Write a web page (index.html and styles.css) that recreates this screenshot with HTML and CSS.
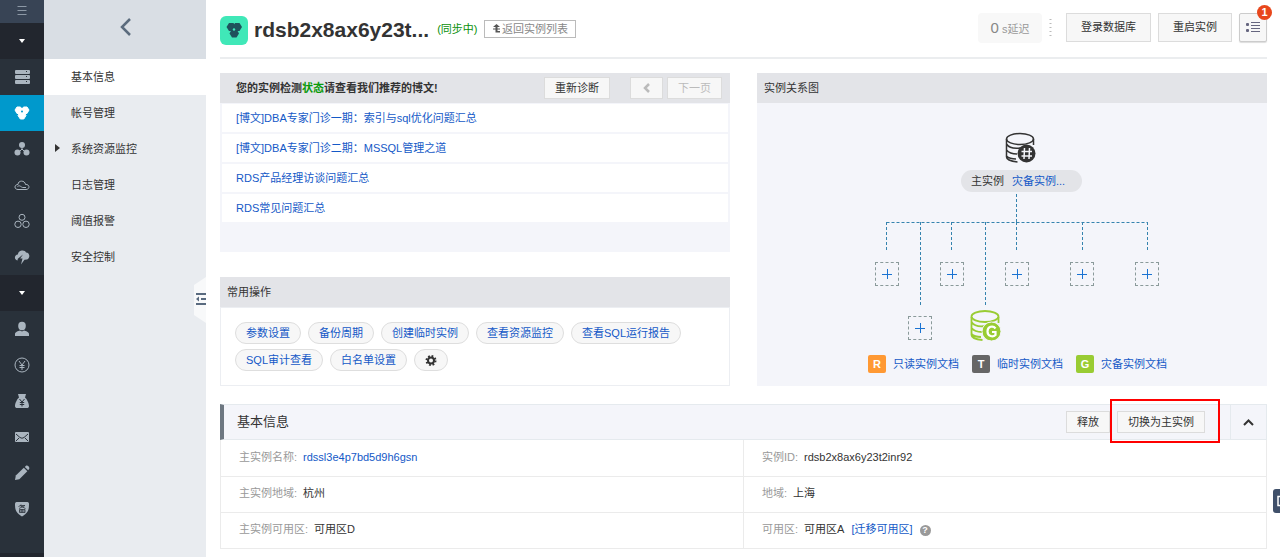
FILE: index.html
```html
<!DOCTYPE html>
<html lang="zh-CN">
<head>
<meta charset="utf-8">
<meta name="viewport" content="width=device-width, initial-scale=1">
<title>RDS 基本信息</title>
<link rel="stylesheet" href="styles.css">
</head>
<body>
<div class="app">
  <nav class="rail" aria-label="产品导航">
    <button class="rail-menu" type="button" aria-label="菜单">
      <svg width="10" height="12" viewBox="0 0 10 12" stroke="#8d99a6"><path d="M0.5 1.5h9M0.5 5.500h9M0.5 9.500h9"/></svg>
    </button>
    <button class="rail-item rail-group" type="button" aria-label="产品"><svg width="6" height="4" viewBox="0 0 6 4"><path d="M0 0h6L3 4z" fill="#fff"/></svg></button>
    <a class="rail-item" href="#" aria-label="服务器">
      <svg width="16" height="16" viewBox="0 0 16 16"><g fill="#aab5bf"><rect x="1" y="1" width="15" height="4" rx="1"/><rect x="1" y="6" width="15" height="4" rx="1"/><rect x="1" y="11" width="15" height="4" rx="1"/></g><g fill="#29313a"><rect x="12" y="2" width="1" height="1"/><rect x="12" y="7" width="1" height="1"/><rect x="12" y="12" width="1" height="1"/></g></svg>
    </a>
    <a class="rail-item rail-active" href="#" aria-label="云数据库">
      <svg width="16" height="16" viewBox="0 0 16 16"><g fill="#fff" stroke="#fff" stroke-linejoin="round"><path d="M3 2h3.500L8.500 5 6.500 8.500H3L1 5z"/><path d="M9.500 2H13L15 5 13 8.500H9.500L7.500 5z"/><path d="M6.300 6.500h3.500L12 10.500 9.800 14H6.300L4 10.500z"/></g><circle cx="8" cy="6.500" r="1" fill="#0099cc"/></svg>
    </a>
    <a class="rail-item" href="#" aria-label="负载均衡">
      <svg width="16" height="16" viewBox="0 0 16 16"><path d="M8 4v4L4 12M8 8l4 4" fill="none" stroke="#aab5bf"/><g fill="#aab5bf"><circle cx="8" cy="4" r="3"/><circle cx="3.500" cy="11.500" r="3"/><circle cx="12.500" cy="11.500" r="3"/></g></svg>
    </a>
    <a class="rail-item" href="#" aria-label="云存储">
      <svg width="16" height="16" viewBox="0 0 16 16" fill="none" stroke="#aab5bf"><path d="M4 12.500C0 12.500 0 7.500 4 7.500 4 3 11 3 11.500 7.500 16 7 16 12.500 12 12.500z"/><path d="M3.500 9.500C6 7.500 7 10.500 9 10.500h3"/></svg>
    </a>
    <a class="rail-item" href="#" aria-label="内容分发">
      <svg width="16" height="16" viewBox="0 0 16 16" fill="none" stroke="#aab5bf"><circle cx="8" cy="4.300" r="3"/><circle cx="4" cy="11.300" r="3.200"/><circle cx="12" cy="11.300" r="3.200"/></svg>
    </a>
    <a class="rail-item" href="#" aria-label="云监控">
      <svg width="16" height="16" viewBox="0 0 16 16"><path d="M3.500 11.500C-.5 10.500.5 5.500 4 5.500 4 .5 11.500.5 12 3.500c4 0 4.500 6 1 7l-2.500.2L7 15.500l1.500-6H6.200L9 5.500 3.800 9.800z" fill="#aab5bf"/></svg>
    </a>
    <button class="rail-item rail-group" type="button" aria-label="用户中心"><svg width="6" height="4" viewBox="0 0 6 4"><path d="M0 0h6L3 4z" fill="#fff"/></svg></button>
    <a class="rail-item" href="#" aria-label="账号">
      <svg width="16" height="16" viewBox="0 0 16 16" fill="#aab5bf"><ellipse cx="8" cy="5" rx="3.800" ry="4.200"/><path d="M1 15v-2c0-2 3-3 5-3.500l2 1 2-1c2 .5 5 1.500 5 3.500v2z"/></svg>
    </a>
    <a class="rail-item" href="#" aria-label="费用">
      <svg width="16" height="16" viewBox="0 0 16 16" fill="none" stroke="#aab5bf"><circle cx="8" cy="8" r="7"/><path d="M5 4l3 4 3-4M8 8v5M5.500 8.500h5M5.500 10.500h5"/></svg>
    </a>
    <a class="rail-item" href="#" aria-label="续费">
      <svg width="16" height="16" viewBox="0 0 16 16"><path d="M4 1h8l-1 3.500C13 6 15 10.500 15 13c0 1.500-1 2-2 2H3c-1 0-2-.5-2-2 0-2.500 2-7 4-8.500z" fill="#aab5bf"/><path d="M5.500 6L8 9l2.500-3M8 9v4.500M5.800 9.500h4.400M5.800 11.500h4.400" fill="none" stroke="#29313a"/></svg>
    </a>
    <a class="rail-item" href="#" aria-label="消息">
      <svg width="16" height="16" viewBox="0 0 16 16"><rect x="1" y="3" width="14" height="10" rx="1" fill="#aab5bf"/><path d="M2 5l4 3.500q2 1.500 4 0L14 5M2 12l3-3M14 12l-3-3" fill="none" stroke="#29313a"/></svg>
    </a>
    <a class="rail-item" href="#" aria-label="工单">
      <svg width="16" height="16" viewBox="0 0 16 16" fill="#aab5bf"><path d="M1 15l.8-4.500L9.800 2.800l3.500 3.500-8 8z"/><path d="M10.800 2L12 .8c1.500-1 4 1.500 3.200 3L14.200 5.200z"/></svg>
    </a>
    <a class="rail-item" href="#" aria-label="备案">
      <svg width="16" height="16" viewBox="0 0 16 16"><path d="M2.500 1h11c1 0 1.500 1 1.500 2 0 6-1 9-7 12.500C2 12 1 9 1 3c0-1 .5-2 1.500-2z" fill="#aab5bf"/><path d="M7 3.500L4.500 6M6 4.500h5L5 7.500M6.500 5l5 2.500M5.500 8.500h5.500v3H5.500zM8 8v3.500M5.500 10H11" fill="none" stroke="#29313a" stroke-width=".8"/></svg>
    </a>
  </nav>

  <aside class="side">
    <button class="side-back" type="button" aria-label="返回">
      <svg width="11" height="18" viewBox="0 0 11 18"><path d="M10 1L2 9l8 8" fill="none" stroke="#5b6b7d" stroke-width="2.500"/></svg>
    </button>
    <a class="side-item side-current" href="#">基本信息</a>
    <a class="side-item" href="#">帐号管理</a>
    <a class="side-item side-parent" href="#">系统资源监控</a>
    <a class="side-item" href="#">日志管理</a>
    <a class="side-item" href="#">阈值报警</a>
    <a class="side-item" href="#">安全控制</a>
    <button class="side-fold" type="button" aria-label="收起菜单">
      <svg width="12" height="46" viewBox="0 0 12 46"><path d="M12 0L0 8v30l12 8z" fill="#f8f9fa"/><g fill="#596a7f"><rect x="2" y="16" width="10" height="2"/><rect x="7" y="21" width="5" height="2"/><path d="M2 22l3-2.500v5z"/><rect x="2" y="26" width="10" height="2"/></g></svg>
    </button>
  </aside>

  <main class="main">
    <header class="head">
      <svg class="head-logo" width="28" height="29" viewBox="0 0 28 29"><rect width="28" height="29" rx="6" fill="#40e8b8"/><g fill="#1f525c"><path d="M9 7h4.500l2.500 4-2.500 4H9l-2.500-4z"/><path d="M15 7h4.500l2.500 4-2.500 4H15l-2.500-4z"/><path d="M12 13h4.500l2.500 4.500-2.500 4H12l-2.500-4z"/></g><circle cx="14" cy="13.500" r="1.200" fill="#40e8b8"/></svg>
      <h1 class="head-name">rdsb2x8ax6y23t...</h1>
      <span class="head-state">(同步中)</span>
      <button class="head-return" type="button"><svg width="7" height="9" viewBox="0 0 7 9"><path d="M3.500 0L7 3H4.500v1.500H7v1H4.500V7H7v1.500H2.500v-3H0v-1h2.500V3H0z" fill="#555"/></svg>返回实例列表</button>
      <div class="head-tools">
        <span class="delay"><b class="delay-num">0</b> s延迟</span>
        <svg class="dots" width="3" height="20" viewBox="0 0 3 20" stroke="#bbb" stroke-width="2" stroke-dasharray="1 3"><path d="M1.500 1v18"/></svg>
        <button class="btn btn-large btn-login" type="button">登录数据库</button>
        <button class="btn btn-large btn-restart" type="button">重启实例</button>
        <button class="btn btn-list" type="button" aria-label="任务列表">
          <svg width="14" height="11" viewBox="0 0 14 11" fill="#66667f"><rect y="1" width="3" height="3" rx="1"/><rect y="7" width="3" height="3" rx="1"/><path d="M5 0h9v1H5zM5 3h9v1H5zM5 6h9v1H5zM5 9h9v1H5z"/></svg>
          <span class="badge">1</span>
        </button>
      </div>
    </header>

    <div class="columns">
      <div class="stack">
        <section class="panel articles">
          <div class="panel-head articles-head">
            <h2 class="articles-title">您的实例检测<span class="ok">状态</span>请查看我们推荐的博文!</h2>
            <button class="btn btn-diagnose" type="button">重新诊断</button>
            <button class="btn btn-prev" type="button" disabled aria-label="上一页"><svg width="7" height="10" viewBox="0 0 7 10"><path d="M6 1L2 5l4 4" fill="none" stroke="#bbb" stroke-width="2.500"/></svg></button>
            <button class="btn btn-next" type="button" disabled>下一页</button>
          </div>
          <ul class="article-list">
            <li class="article"><a href="#">[博文]DBA专家门诊一期：索引与sql优化问题汇总</a></li>
            <li class="article"><a href="#">[博文]DBA专家门诊二期：MSSQL管理之道</a></li>
            <li class="article"><a href="#">RDS产品经理访谈问题汇总</a></li>
            <li class="article"><a href="#">RDS常见问题汇总</a></li>
          </ul>
        </section>
        <section class="panel ops">
          <h2 class="panel-head">常用操作</h2>
          <div class="ops-list">
            <a class="pill" href="#">参数设置</a><a class="pill" href="#">备份周期</a><a class="pill" href="#">创建临时实例</a><a class="pill" href="#">查看资源监控</a><a class="pill" href="#">查看SQL运行报告</a><a class="pill" href="#">SQL审计查看</a><a class="pill" href="#">白名单设置</a>
            <button class="pill" type="button" aria-label="设置"><svg width="12" height="11" viewBox="0 0 12 11"><circle cx="6" cy="5.500" r="3" fill="none" stroke="#333" stroke-width="2"/><circle cx="6" cy="5.500" r="4.500" fill="none" stroke="#333" stroke-width="2" stroke-dasharray="1.770 1.770"/></svg></button>
          </div>
        </section>
      </div>

      <section class="panel relation">
        <h2 class="panel-head">实例关系图</h2>
        <div class="canvas">
          <svg class="wires" width="320" height="206" viewBox="0 0 320 206" fill="none" stroke="#3583ae" stroke-dasharray="3 2"><path d="M164.500 91v28M34.500 119.500h261M34.500 119v28M68.500 119v83M99.500 119v28M133.500 119v83M164.500 119v28M230.500 119v28M295.500 119v28"/></svg>
          <svg class="node node-main" width="31" height="32" viewBox="0 0 31 32"><g fill="none" stroke="#333" stroke-width="1.500"><ellipse cx="15" cy="7" rx="13.500" ry="5.500"/><path d="M1.500 7v18c0 2.500 5 4.500 11 5M28.500 7v6M1.500 12c2 3 7 5 14 4M1.500 18c2 2.500 6 4 10.500 4M1.500 24c2 2 5 3 9.500 3"/></g><circle cx="21.500" cy="21.500" r="9" fill="#333"/><path d="M19.500 16l-.5 11M24.500 16l-.5 11M16.500 19.500H27M16.500 24H27" stroke="#f4f5fa" stroke-width="1.500"/></svg>
          <div class="node main-label"><span>主实例</span><a href="#">灾备实例...</a></div>
          <button class="node add add-1" type="button" aria-label="添加实例"></button>
          <button class="node add add-2" type="button" aria-label="添加实例"></button>
          <button class="node add add-3" type="button" aria-label="添加实例"></button>
          <button class="node add add-4" type="button" aria-label="添加实例"></button>
          <button class="node add add-5" type="button" aria-label="添加实例"></button>
          <button class="node add add-6" type="button" aria-label="添加实例"></button>
          <svg class="node node-backup" width="31" height="32" viewBox="0 0 31 32"><g fill="none" stroke="#99cc33" stroke-width="1.800"><ellipse cx="15" cy="6.500" rx="13.500" ry="5.500"/><path d="M1.500 7v18c0 2.500 5 4.500 11 5M28.500 7v6M1.500 12c2 3 7 5 14 4M1.500 18c2 2.500 6 4 10.500 4M1.500 24c2 2 5 3 9.500 3"/></g><circle cx="21.500" cy="21.500" r="9.500" fill="#99cc33" stroke="#f4f5fa"/><path d="M25.500 18.500c-2.500-3.500-8-2-8 3s5.500 6 8 3.500V22H22" fill="none" stroke="#fff" stroke-width="2.200"/></svg>
        </div>
        <div class="legend">
          <a class="legend-item" href="#"><span class="tag tag-r">R</span>只读实例文档</a>
          <a class="legend-item" href="#"><span class="tag tag-t">T</span>临时实例文档</a>
          <a class="legend-item" href="#"><span class="tag tag-g">G</span>灾备实例文档</a>
        </div>
      </section>
    </div>

    <section class="info">
      <div class="info-head">
        <h2 class="info-title">基本信息</h2>
        <button class="btn info-btn" type="button">释放</button>
        <span class="marked"><button class="btn info-btn" type="button">切换为主实例</button></span>
        <button class="info-fold" type="button" aria-label="收起"><svg width="11" height="7" viewBox="0 0 11 7"><path d="M1 6l4.500-4.500L10 6" fill="none" stroke="#333" stroke-width="2"/></svg></button>
      </div>
      <table class="info-table">
        <tr><td><span class="key">主实例名称:</span><a href="#">rdssl3e4p7bd5d9h6gsn</a></td><td><span class="key">实例ID:</span>rdsb2x8ax6y23t2inr92</td></tr>
        <tr><td><span class="key">主实例地域:</span>杭州</td><td><span class="key">地域:</span>上海</td></tr>
        <tr><td><span class="key">主实例可用区:</span>可用区D</td><td><span class="key">可用区:</span>可用区A<a class="move" href="#">[迁移可用区]</a><span class="help">?</span></td></tr>
      </table>
    </section>
  </main>
  <button class="feedback" type="button" aria-label="咨询"><svg width="7" height="24" viewBox="0 0 7 24"><path d="M7 7.500H5v9h2" fill="none" stroke="#fff" stroke-width="1.500"/></svg></button>
</div>
</body>
</html>
```

FILE: styles.css
```css
* { box-sizing: border-box; }

body {
  margin: 0;
  background: #fff;
  color: #333;
  font: 11px/16px "Liberation Sans", "Noto Sans CJK SC", sans-serif;
}

button { margin: 0; padding: 0; border: 0; background: none; color: inherit; font: inherit; }
a { color: #1459c7; text-decoration: none; }
h1, h2, ul { margin: 0; padding: 0; font: inherit; }
svg { display: block; flex: none; }

.app { display: flex; height: 100vh; overflow: hidden; position: relative; }

/* Icon rail */
.rail {
  flex: none;
  width: 44px;
  display: flex;
  flex-direction: column;
  background: #29313a;
  border-bottom: 4px solid #22262e;
}
.rail-menu { height: 23px; flex: none; display: flex; align-items: center; justify-content: center; padding-bottom: 2px; background: #384455; }
.rail-item { height: 36px; flex: none; display: flex; align-items: center; justify-content: center; padding-bottom: 1px; }
.rail-group { background: #22262e; }
.rail-active { background: #0099cc; }

/* Section menu */
.side { flex: none; width: 162px; position: relative; background: #e9ecf0; }
.side-back {
  width: 100%;
  height: 59px;
  display: flex;
  align-items: center;
  justify-content: center;
  background: #d9dee4;
  padding-bottom: 6px;
}
.side-item { display: block; padding-left: 27px; line-height: 36px; color: #333; }
.side-current { background: #fff; }
.side-parent { position: relative; }
.side-parent::before {
  content: "";
  position: absolute;
  left: 11px;
  top: 13px;
  border: 4px solid transparent;
  border-left: 5px solid #333;
  border-right: 0;
}
.side-fold { position: absolute; right: 0; top: 277px; }

/* Page */
.main { flex: 1; min-width: 0; padding: 0 13px 0 14px; }

.head { display: flex; align-items: center; height: 59px; border-bottom: 2px solid #ebedef; margin-bottom: 14px; }
.head-logo { margin-top: 4px; }
.head-name { margin: 2px 8px 0 6px; font-size: 21px; line-height: 28px; font-weight: bold; white-space: nowrap; }
.head-state { color: #0a900a; white-space: nowrap; }
.head-return {
  display: flex;
  align-items: center;
  justify-content: center;
  gap: 2px;
  width: 92px;
  height: 18px;
  margin-left: 7px;
  border: 1px solid #bbb;
  color: #888;
  white-space: nowrap;
}
.head-tools { display: flex; align-items: center; margin-left: auto; padding-bottom: 2px; white-space: nowrap; }
.delay {
  display: flex;
  align-items: baseline;
  justify-content: center;
  gap: 3px;
  width: 64px;
  height: 30px;
  line-height: 30px;
  border-radius: 4px;
  background: #f8f8f8;
  color: #999;
}
.delay-num { font-size: 15px; font-weight: normal; color: #888; }
.dots { margin: 0 14px 0 7px; }

.btn {
  flex: none;
  height: 22px;
  border: 1px solid #dcdcdc;
  background: #f7f7f7;
  color: #333;
  line-height: 20px;
  text-align: center;
  white-space: nowrap;
}
.btn-large { height: 29px; line-height: 27px; margin-right: 7px; }
.btn-login { width: 85px; }
.btn-restart { width: 74px; }
.btn-list {
  position: relative;
  display: flex;
  align-items: center;
  justify-content: center;
  width: 28px;
  height: 29px;
  border-color: #ccc;
  border-radius: 2px;
  box-shadow: 0 1px 1px #ddd;
}
.badge {
  position: absolute;
  top: -9px;
  right: -6px;
  width: 15px;
  height: 15px;
  border-radius: 50%;
  background: #e8471c;
  color: #fff;
  font-weight: bold;
  line-height: 15px;
  text-align: center;
}

.columns { display: grid; grid-template-columns: 1fr 1fr; gap: 27px; }
.stack { display: flex; flex-direction: column; gap: 25px; }
.panel-head { height: 30px; padding: 0 7px; background: #e3e4e8; line-height: 30px; }

.articles { background: #f4f5fa; padding-bottom: 30px; }
.articles-head { display: flex; align-items: center; padding: 0 8px 0 16px; }
.articles-title { flex: 1; font-weight: bold; }
.ok { color: #0a9a0a; }
.btn-diagnose { width: 66px; margin-right: 20px; }
.btn-prev { display: flex; align-items: center; justify-content: center; width: 33px; margin-right: 4px; }
.btn-next { width: 55px; color: #bbb; }
.article-list { list-style: none; display: grid; gap: 2px; padding: 0 2px; }
.article { background: #fff; padding-left: 14px; line-height: 28px; }
.article:first-child { border-top: 1px solid #f4f5fa; }

.ops-list {
  display: flex;
  flex-wrap: wrap;
  gap: 5px 7px;
  padding: 14px;
  border: 1px solid #eceef2;
}
.pill {
  display: flex;
  align-items: center;
  height: 22px;
  padding: 0 10px;
  border: 1px solid #dedede;
  border-radius: 11px;
  background: #f7f7f7;
  white-space: nowrap;
}

.relation { background: #f4f5fa; }
.canvas { position: relative; width: 320px; height: 252px; margin: 0 auto; }
.wires { position: absolute; left: 0; top: 0; }
.node { position: absolute; }
.node-main { left: 153px; top: 29px; }
.node-backup { left: 118px; top: 207px; }
.main-label {
  left: 109px;
  top: 67px;
  display: flex;
  gap: 8px;
  padding: 0 17px 0 10px;
  border-radius: 11px;
  background: #e3e4e8;
  line-height: 22px;
  white-space: nowrap;
}
.add {
  width: 24px;
  height: 24px;
  border: 1px dashed #8a9a9a;
  background:
    linear-gradient(#1a73d2, #1a73d2) center / 10px 1px no-repeat,
    linear-gradient(#1a73d2, #1a73d2) center / 1px 10px no-repeat;
}
.add-1 { left: 23px; top: 159px; }
.add-2 { left: 88px; top: 159px; }
.add-3 { left: 153px; top: 159px; }
.add-4 { left: 218px; top: 159px; }
.add-5 { left: 283px; top: 159px; }
.add-6 { left: 56px; top: 213px; }
.legend { display: flex; justify-content: center; gap: 13px; height: 30px; padding-left: 11px; white-space: nowrap; }
.legend-item { display: flex; gap: 7px; height: 18px; line-height: 18px; }
.tag { width: 18px; border-radius: 2px; color: #fff; font-weight: bold; text-align: center; }
.tag-r { background: #ff9933; }
.tag-t { background: #666; }
.tag-g { background: #99cc33; }

.info { margin-top: 18px; }
.info-head {
  display: flex;
  align-items: center;
  height: 36px;
  border: 1px solid #e5eaee;
  border-left: 4px solid #6d7781;
  background: #f4f5fa;
}
.info-title { flex: 1; padding-left: 13px; font-size: 13px; }
.info-btn { padding: 0 10px; }
.marked { position: relative; margin: 0 25px 0 7px; }
.marked::after {
  content: "";
  position: absolute;
  inset: -12px -15px -10px -7px;
  border: 2px solid #f00;
  pointer-events: none;
}
.info-fold { display: flex; align-items: center; justify-content: center; align-self: stretch; width: 36px; border-left: 1px solid #e5eaee; }
.info-table { width: 100%; table-layout: fixed; border-collapse: collapse; }
.info-table td { height: 36px; padding: 0 18px 2px; border: 1px solid #ebebeb; border-top: 0; }
.key { margin-right: 6px; color: #999; }
.move { margin-left: 7px; }
.help {
  display: inline-block;
  width: 11px;
  margin-left: 7px;
  border-radius: 50%;
  background: #999;
  color: #fff;
  font-size: 9px;
  font-weight: bold;
  line-height: 11px;
  text-align: center;
}

.feedback { position: absolute; right: 0; top: 489px; border-radius: 3px 0 0 3px; background: #40506a; }
```
